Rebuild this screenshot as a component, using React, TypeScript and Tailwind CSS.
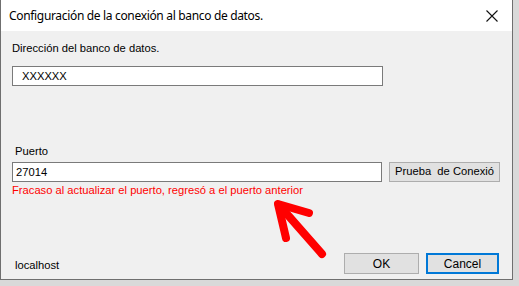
import React from 'react';

function CloseIcon() {
  return (
    <svg width="12" height="12" viewBox="0 0 12 12" className="block">
      <path d="M0.5 0.5L11.5 11.5M11.5 0.5L0.5 11.5" stroke="#111" strokeWidth="1.1" />
    </svg>
  );
}

export default function App() {
  return (
    <div className="relative w-[519px] h-[286px] bg-[#d9d9d9] overflow-hidden font-['Liberation_Sans',Arial,sans-serif] text-[11.2px] leading-[13px] text-black">
      {/* Dialog window */}
      <div className="w-[513px] h-[280px] border-l border-r border-b border-[#6f6f6f] flex flex-col bg-[#f0f0f0]">
        {/* Title bar */}
        <div className="h-[31px] bg-white flex items-center pl-[8px] pr-[14px]">
          <span className="text-[12px] font-['Noto_Sans',sans-serif] tracking-[-0.33px] text-black">
            Configuración de la conexión al banco de datos.
          </span>
          <div className="ml-auto">
            <CloseIcon />
          </div>
        </div>

        {/* Body */}
        <div className="flex-1 flex flex-col pt-[11px] pl-[11px] pr-[11px]">
          <span>Dirección del banco de datos.</span>
          <div className="mt-[11px] w-[371px] h-[20px] bg-white border border-[#7a7a7a] flex items-center pl-[9px]">
            XXXXXX
          </div>

          <span className="mt-[59px] ml-[3px]">Puerto</span>
          <div className="mt-[4px] flex items-center">
            <div className="w-[370px] h-[20px] bg-white border border-[#7a7a7a] flex items-center pl-[3px]">
              27014
            </div>
            <button className="ml-[7px] w-[111px] h-[20px] bg-[#e1e1e1] border border-[#adadad] text-[11.2px] leading-none flex items-center justify-center">
              Prueba&nbsp; de Conexió
            </button>
          </div>
          <span className="mt-[2px] text-[#ff0000]">
            Fracaso al actualizar el puerto, regresó a el puerto anterior
          </span>

          <div className="mt-auto mb-[5px] flex items-center">
            <span className="ml-[3px] mt-[3px]">localhost</span>
            <button className="ml-auto w-[75px] h-[21px] bg-[#e1e1e1] border border-[#adadad] text-[12px] leading-none flex items-center justify-center">
              OK
            </button>
            <button className="ml-[7px] mr-[2px] w-[73px] h-[21px] bg-[#e1e1e1] border-2 border-[#0078d7] text-[12px] leading-none flex items-center justify-center">
              Cancel
            </button>
          </div>
        </div>
      </div>

      {/* Red annotation arrow */}
      <svg className="absolute left-0 top-0 pointer-events-none" width="519" height="286" viewBox="0 0 519 286">
        <g stroke="#ff0000" strokeWidth="8" strokeLinecap="round" strokeLinejoin="round" fill="none">
          <path d="M279 205L322 254" />
          <path d="M286 238L278 204L309 213" />
        </g>
      </svg>
    </div>
  );
}
